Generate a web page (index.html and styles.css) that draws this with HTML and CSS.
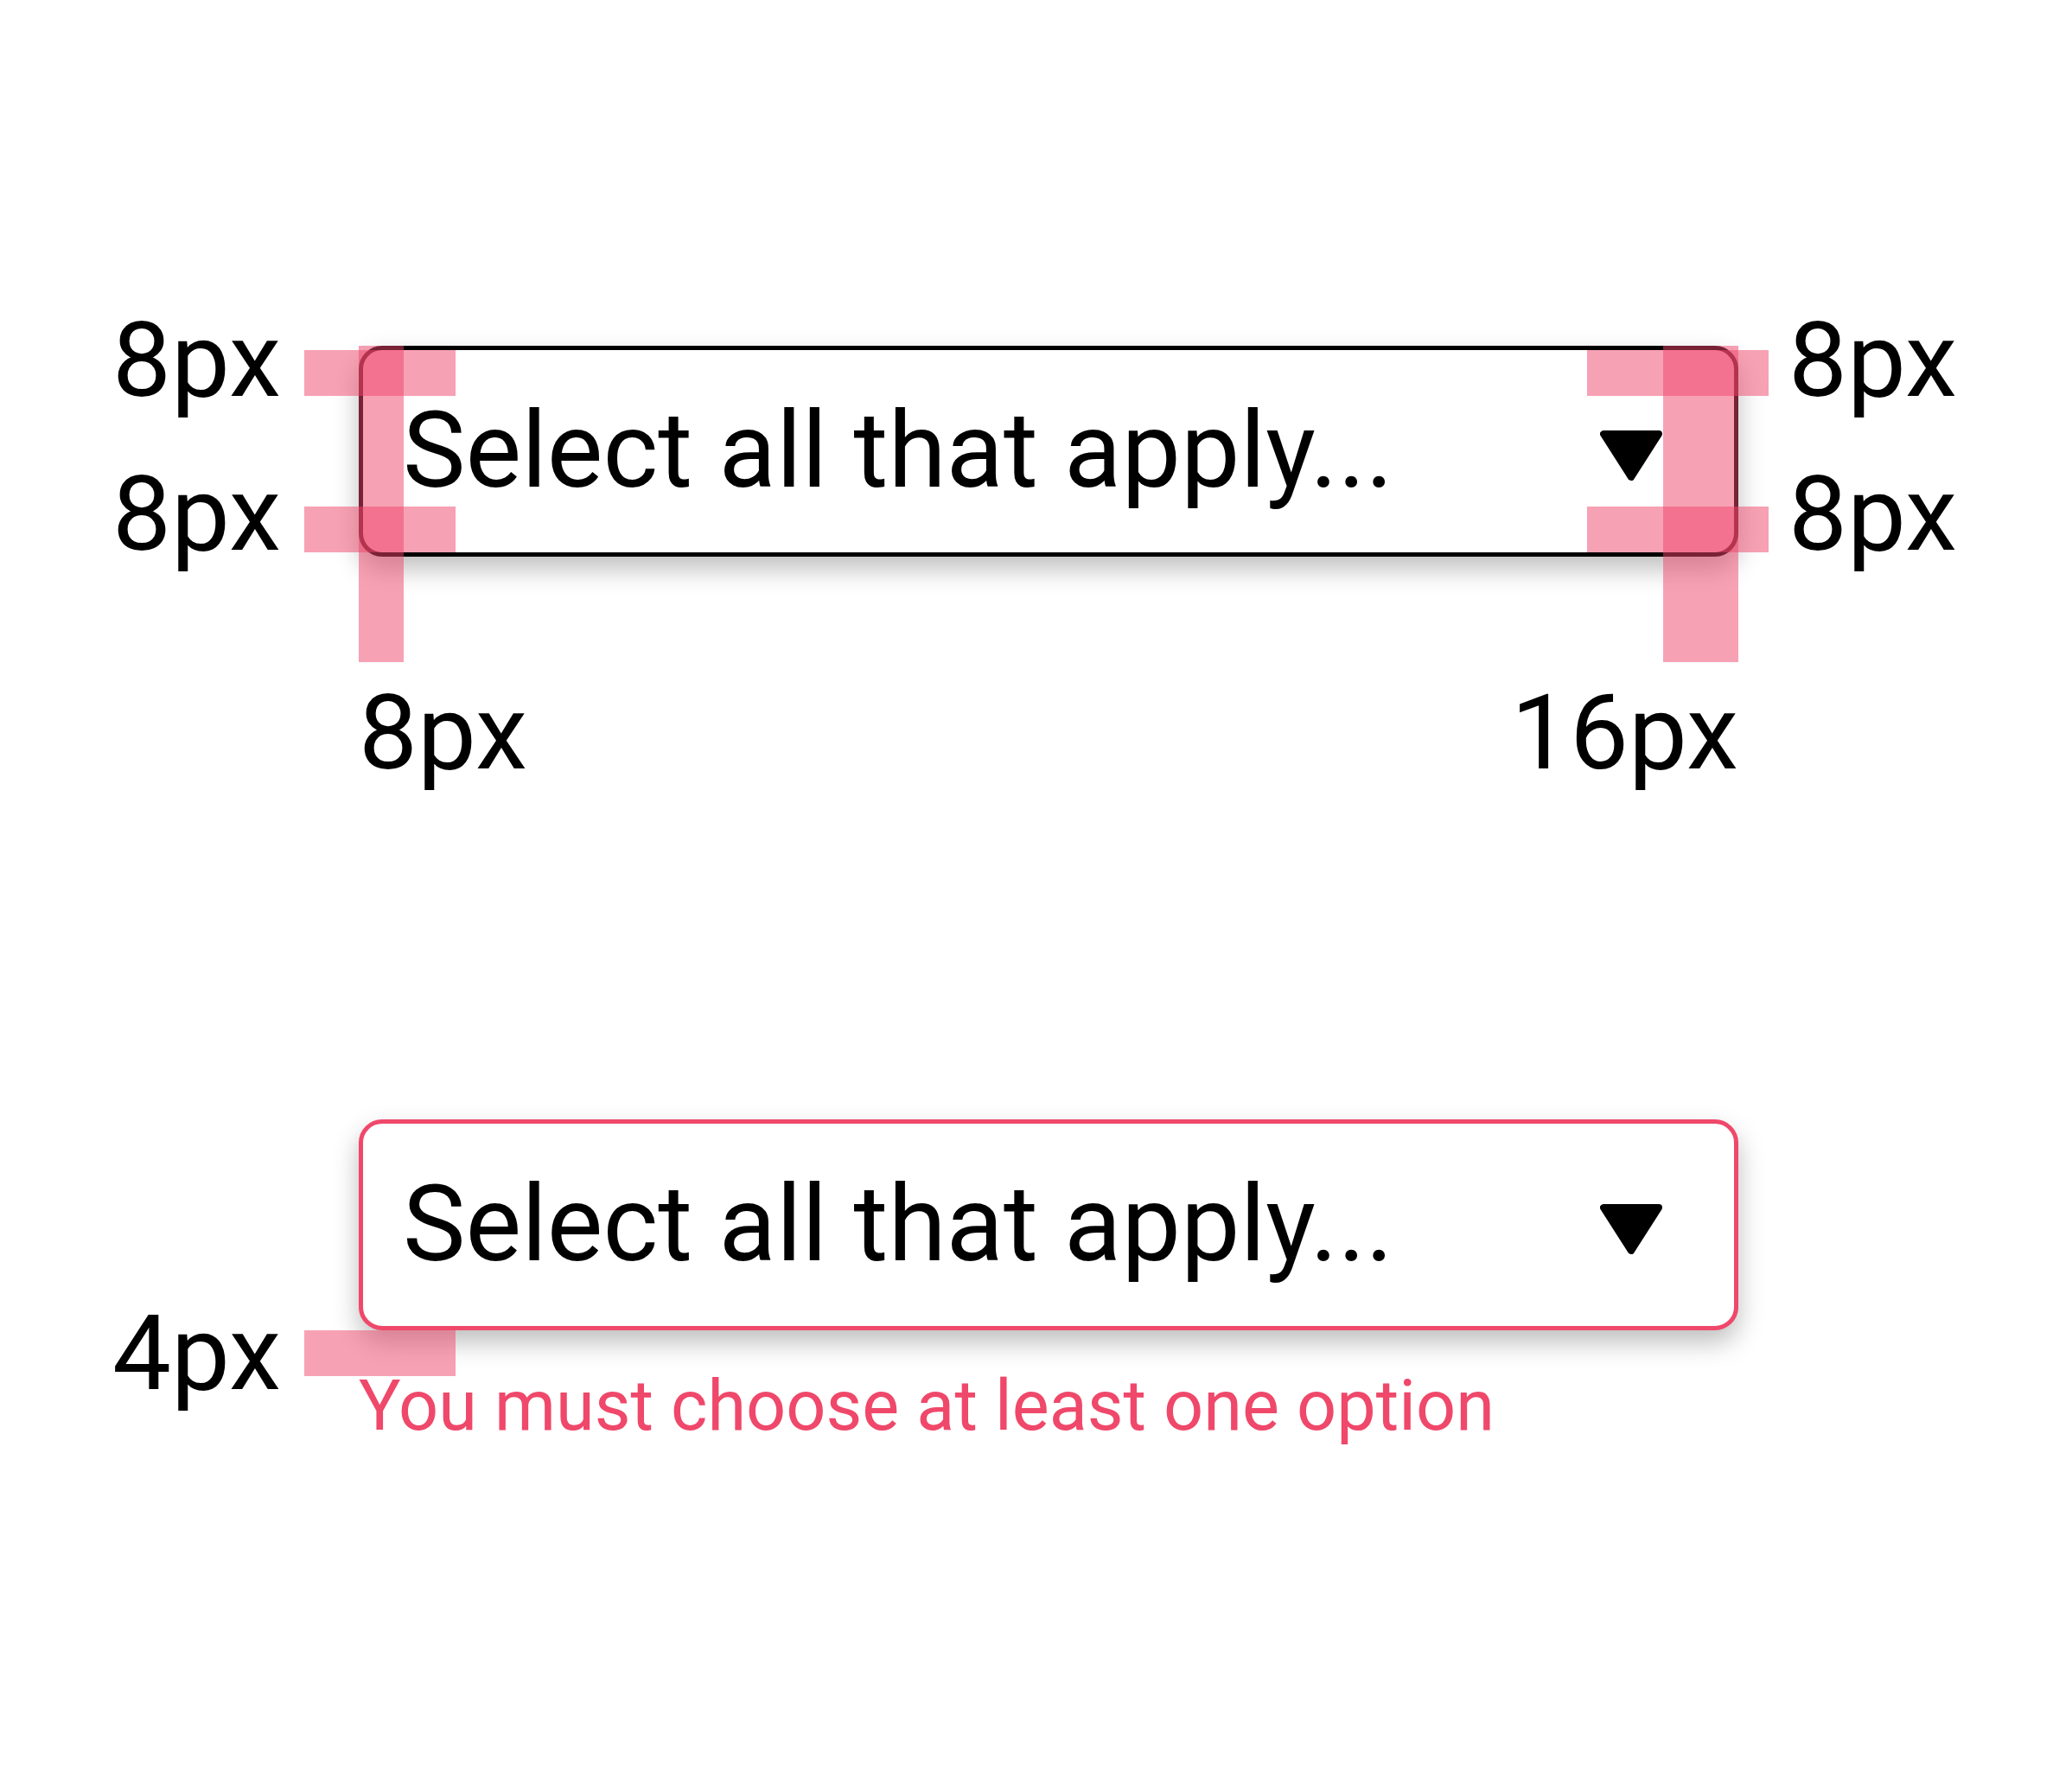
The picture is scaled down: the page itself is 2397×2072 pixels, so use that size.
FILE: index.html
```html
<!DOCTYPE html>
<html lang="en">
<head>
<meta charset="utf-8">
<title>Select spec</title>
<link rel="stylesheet" href="styles.css">
</head>
<body>
<main class="page">
  <section class="spec spec-default">
    <div class="side side-left">
      <span class="lbl">8px</span>
      <span class="lbl">8px</span>
    </div>
    <div class="field-col">
      <div class="select">
        <span class="select-text">Select all that apply...</span>
        <svg class="caret" viewBox="0 0 72 58" aria-hidden="true"><polygon points="4,4 68,4 36,54"/></svg>
      </div>
      <div class="mark mark-vl"></div>
      <div class="mark mark-hl mark-top"></div>
      <div class="mark mark-hl mark-bottom"></div>
      <div class="mark mark-vr"></div>
      <div class="mark mark-hr mark-top"></div>
      <div class="mark mark-hr mark-bottom"></div>
      <div class="under-labels">
        <span class="lbl">8px</span>
        <span class="lbl">16px</span>
      </div>
    </div>
    <div class="side side-right">
      <span class="lbl">8px</span>
      <span class="lbl">8px</span>
    </div>
  </section>

  <section class="spec spec-error">
    <div class="side side-left side-error">
      <span class="lbl">4px</span>
    </div>
    <div class="field-col">
      <div class="select select-invalid">
        <span class="select-text">Select all that apply...</span>
        <svg class="caret" viewBox="0 0 72 58" aria-hidden="true"><polygon points="4,4 68,4 36,54"/></svg>
      </div>
      <div class="mark mark-hl mark-gap"></div>
      <p class="error-msg">You must choose at least one option</p>
    </div>
    <div class="side side-right"></div>
  </section>
</main>
</body>
</html>
```

FILE: styles.css
```css
* { box-sizing: border-box; }

html, body {
  margin: 0;
  padding: 0;
  background: #ffffff;
}

body {
  font-family: Roboto, "Noto Sans", "Liberation Sans", sans-serif;
  color: #000000;
}

.page {
  width: 2397px;
  min-height: 2072px;
  padding-top: 357px;
  display: flex;
  flex-direction: column;
  gap: 386px;
}

.spec {
  display: grid;
  grid-template-columns: 415px 1596px 1fr;
  align-items: start;
}

.lbl {
  display: block;
  font-size: 121px;
  line-height: 121px;
  white-space: nowrap;
}

.side {
  display: flex;
  flex-direction: column;
  gap: 57px;
}

.side-left {
  align-items: flex-end;
  padding-right: 90px;
}

.side-right {
  align-items: flex-start;
  padding-left: 58px;
}

.side-error {
  padding-top: 211px;
}

.field-col {
  position: relative;
}

.spec-default .field-col {
  margin-top: 43px;
}

.select {
  display: flex;
  align-items: flex-start;
  height: 244px;
  padding: 53px 83px 53px 46px;
  border: 5px solid #000000;
  border-radius: 27px;
  background: #ffffff;
  box-shadow: 0 14px 30px rgba(0, 0, 0, 0.26);
}

.select-invalid {
  border-color: #ef486a;
}

.select-text {
  font-size: 122px;
  line-height: 128px;
  white-space: nowrap;
}

.caret {
  display: block;
  width: 72px;
  height: 58px;
  margin-left: auto;
  margin-top: 40px;
  flex-shrink: 0;
}

.caret polygon {
  fill: #000000;
  stroke: #000000;
  stroke-width: 8;
  stroke-linejoin: round;
}

.mark {
  position: absolute;
  background: rgba(240, 68, 106, 0.5);
}

.mark-vl {
  left: 0;
  top: 0;
  width: 52px;
  height: 366px;
}

.mark-vr {
  left: 1509px;
  top: 0;
  width: 87px;
  height: 366px;
}

.mark-hl {
  left: -63px;
  width: 175px;
  height: 53px;
}

.mark-hr {
  left: 1421px;
  width: 210px;
  height: 53px;
}

.mark-top { top: 5px; }
.mark-bottom { top: 186px; }
.mark-gap { top: 244px; }

.under-labels {
  display: flex;
  justify-content: space-between;
  margin-top: 144px;
}

.error-msg {
  margin: 40px 0 0;
  font-size: 81px;
  line-height: 96px;
  color: #ef486a;
  white-space: nowrap;
}
```
